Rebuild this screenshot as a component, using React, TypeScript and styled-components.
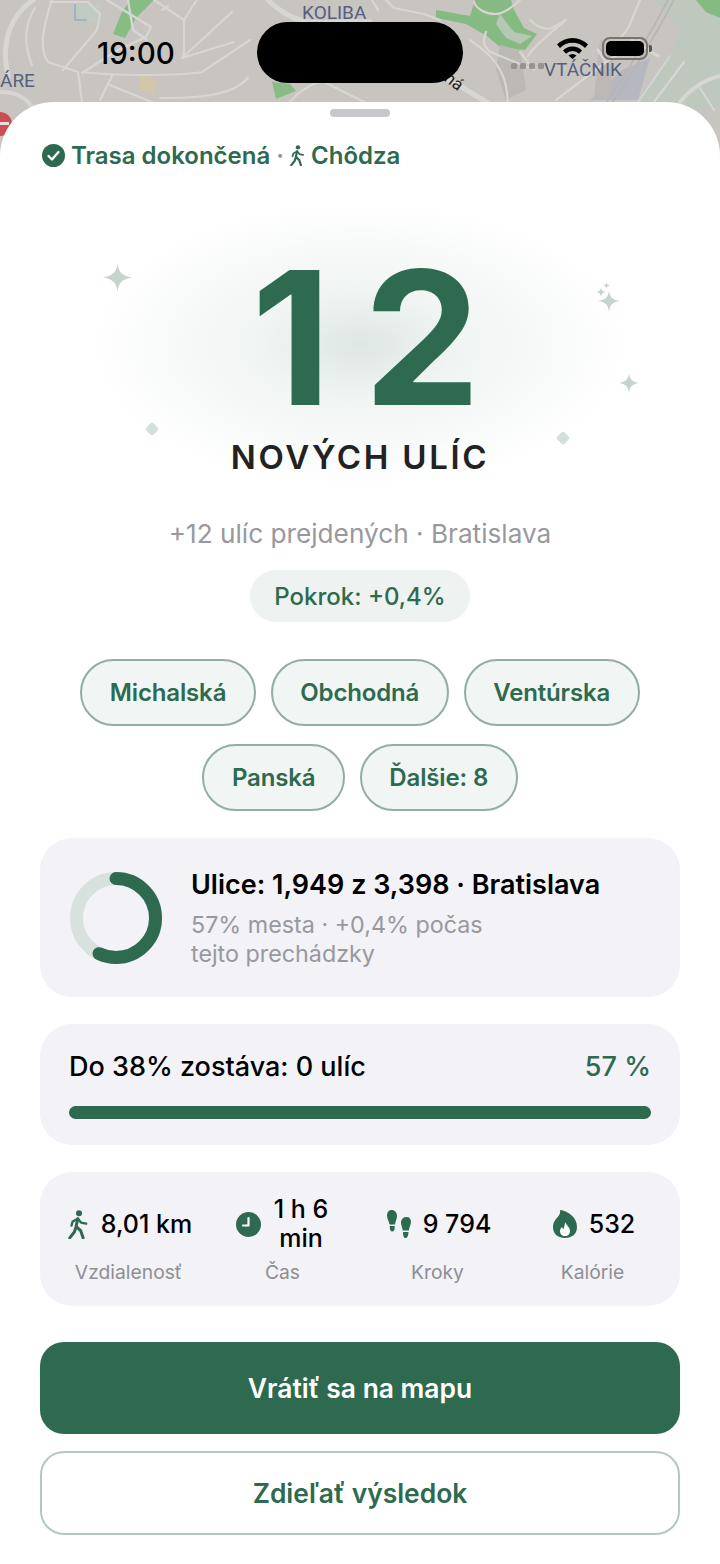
import styled, { createGlobalStyle } from 'styled-components';

const green = '#2d6a4f';

const GlobalStyle = createGlobalStyle`
  html, body {
    margin: 0;
    padding: 0;
    background: #fff;
  }
  * {
    box-sizing: border-box;
  }
`;

function MapBackdrop() {
  return (
    <MapSvg viewBox="0 0 720 170">
      <rect width="720" height="170" fill="#c8c5c1" />
      {/* parks and water */}
      <path d="M656 0h64v110h-90l40-50 10-30z" fill="#bfc8bc" />
      <path d="M590 100l32-30 28-12-12 42z" fill="#b5b7c1" />
      <path d="M130 0h24l-18 18-11 20-12-4 8-20z" fill="#86bd83" />
      <path d="M436 10l34 6 5-16h36l3 10 10 18 13 6-12 16-24-2-14-12-21-12-30-6z" fill="#85ba82" />
      <path d="M500 14l14 18 18 4-12 8-14-6-10-14z" fill="#b6c7b3" />
      <path d="M272 82l18 2 6 7-20 8z" fill="#86bd83" />
      <path d="M696 0h24v18l-14-6z" fill="#85ba82" />
      <path d="M75 4h26v18H80z" fill="#c2cbc1" />
      <path d="M75 4v16h12" fill="none" stroke="#8eb0c6" strokeWidth="1.500" />
      <path d="M140 75l16 4-2 16-14-4z" fill="#d2c7ab" />
      <path d="M500 45l20 5 6 40-20 10-10-30z" fill="#bcb8b4" />
      <path d="M600 40l14 6-4 50-16 2z" fill="#bcb8b4" />
      {/* streets */}
      <g fill="none" stroke="#d8d6d2" strokeWidth="2.200" strokeLinecap="round" strokeLinejoin="round">
        <path d="M33 0C16 12 8 28 6 46c-2 10 0 20 2 30" strokeWidth="5" />
        <path d="M35 8C26 22 22 40 32 65" />
        <path d="M52 0C44 24 38 48 48 62l30 10 4 30" />
        <path d="M50 2h38l12 12-3 16-34 40" />
        <path d="M107 0l44 27-5 10-30 14-34 22" />
        <path d="M128 0l5 30 14 10" />
        <path d="M154 0l30 20v34l-2 4 50-46" />
        <path d="M162 10l6-4M184 20l14-22" />
        <path d="M182 58l52-16" />
        <path d="M82 72c30 4 100 4 120 0l48-32" />
        <path d="M112 76l-12 24M110 85l44 18" />
        <path d="M160 98c30 0 70 0 88-20" />
        <path d="M0 92c15 0 26 4 36 20" strokeWidth="4" />
        <path d="M268 0c14 14 28 20 42 22 20 2 40-2 60 0" strokeWidth="5" />
        <path d="M386 0l8 8 30 6 16 6" />
        <path d="M372 0l6 10" />
        <path d="M290 102c8-10 22-20 34-20l40 20" />
        <path d="M434 72l26 14 36 22" strokeWidth="5" />
        <path d="M470 40c14 10 24 18 30 30 6 10 8 24 8 40" />
        <path d="M486 32c-4 10-2 14 4 20l40 16" />
        <path d="M520 0c-8 8-18 14-24 14-12 0-20-6-22-12" />
        <path d="M530 20c6 6 14 10 22 8l14-8" />
        <path d="M566 20c-14 12-30 24-38 36" />
        <path d="M520 52l14 18M556 100l50-38 34-22" />
        <path d="M640 0l-10 24c-2 6-6 10-10 14" />
        <path d="M606 62l-8-12M632 40l26 16" strokeWidth="3" />
        <path d="M670 56l-32 46" strokeWidth="2" stroke="#cfd5d8" />
        <path d="M684 62l-30 40" />
        <path d="M720 76c-18 4-30 14-40 26" strokeWidth="4" />
        <path d="M700 88l14 22" />
        <path d="M668 0l-14 26-30 50-24 36" stroke="#b9b4af" strokeWidth="1.500" />
        <path d="M674 0l-14 26-30 50-24 36" stroke="#b9b4af" strokeWidth="1.500" />
      </g>
      {/* no-entry sign under the sheet corner */}
      <circle cx="0" cy="124" r="12" fill="#cb4f52" />
      <rect x="0" y="122" width="9" height="3" fill="#f3dada" />
    </MapSvg>
  );
}

function StatusBar() {
  return (
    <StatusRow>
      <Clock>19:00</Clock>
      <Island />
      <SignalDots>
        <i />
        <i />
        <i />
        <i />
      </SignalDots>
      <WifiGlyph width="31" height="22" viewBox="0 0 31 22">
        <path d="M0 7.500a22 22 0 0 1 31 0l-3 3.500a17.500 17.500 0 0 0-25 0z" fill="#000" />
        <path d="M6 13.500a13.500 13.500 0 0 1 19 0l-3 3.300a9 9 0 0 0-13 0z" fill="#000" />
        <path d="M11.500 18.500a6 6 0 0 1 8 0L15.500 22z" fill="#000" />
      </WifiGlyph>
      <Battery>
        <span />
      </Battery>
      <BatteryCap />
    </StatusRow>
  );
}

function Sparkle({ size }: { size: number }) {
  return (
    <svg width={size} height={size} viewBox="0 0 24 24">
      <path d="M12 0c.8 7.500 3.500 10.700 12 12-8.500 1.300-11.200 4.500-12 12-.8-7.500-3.500-10.700-12-12 8.500-1.300 11.200-4.500 12-12z" fill="#c5d4cd" />
    </svg>
  );
}

function WalkIcon({ size }: { size: number }) {
  return (
    <svg width={size * 0.72} height={size} viewBox="0 0 18 25" fill="none">
      <circle cx="9.500" cy="2.800" r="2.600" fill={green} />
      <path d="M8.500 7.500 7 14l4 4 2 6M7 14.500 5.500 19l-4 5" stroke={green} strokeWidth="2.600" strokeLinecap="round" strokeLinejoin="round" />
      <path d="M8.500 7.500 4 10l-1 3.500M8.500 7.500l2.700 3.300 4.500 1" stroke={green} strokeWidth="2" strokeLinecap="round" strokeLinejoin="round" />
    </svg>
  );
}

function ClockIcon() {
  return (
    <svg width="25" height="25" viewBox="0 0 25 25">
      <circle cx="12.500" cy="12.500" r="12.500" fill={green} />
      <path d="M12.500 6v7.500H7" fill="none" stroke="#fff" strokeWidth="2.200" strokeLinecap="round" strokeLinejoin="round" />
    </svg>
  );
}

function StepsIcon() {
  return (
    <svg width="24" height="28" viewBox="0 0 24 28" fill={green}>
      <path d="M0 5.500C0 2 2 0 4.800 0S10 2.500 10 6c0 3-1.500 5-2 8.500H2.500C2 11 0 9 0 5.500z" />
      <path d="M2.700 16h5c.2 3.500-.5 5.500-2.500 5.500S2.800 19.500 2.700 16z" />
      <path d="M24 11.500C24 9 22.200 7 19.500 7S14 9 14 12.500c0 3 1.300 5 1.800 8h6c.4-3.500 2.200-5.500 2.200-9z" />
      <path d="M16 22h5.500c-.1 3.500-1 6-3 6s-2.400-2.500-2.500-6z" />
    </svg>
  );
}

function FlameIcon() {
  return (
    <svg width="24" height="28" viewBox="0 0 24 28">
      <path d="M7 0c8 1 17 7 17 17 0 7-5 11-12 11S0 24 0 17C0 12 3 9 5.500 6 7 4 7.500 2 7 0z" fill={green} />
      <path d="M12 12c1 3 5 5 5 9 0 3-2 5-5 5s-5-2-5-5c0-2 1-3 2-4 .3 1 1 1.700 1.700 2C11 17 12 15 12 12z" fill="#fff" />
    </svg>
  );
}

function ProgressRing() {
  const r = 39.5;
  const circumference = 2 * Math.PI * r;
  return (
    <RingSvg width="92" height="92" viewBox="0 0 92 92">
      <circle cx="46" cy="46" r={r} fill="none" stroke="#d9e1df" strokeWidth="13" />
      <circle
        cx="46"
        cy="46"
        r={r}
        fill="none"
        stroke={green}
        strokeWidth="13"
        strokeLinecap="round"
        strokeDasharray={`${circumference * 0.57} ${circumference}`}
        transform="rotate(-90 46 46)"
      />
    </RingSvg>
  );
}

const chipRows = [
  ['Michalská', 'Obchodná', 'Ventúrska'],
  ['Panská', 'Ďalšie: 8'],
];

export default function App() {
  return (
    <Screen>
      <GlobalStyle />
      <MapBackdrop />
      <MapLabel $left={302} $top={1}>KOLIBA</MapLabel>
      <MapLabel $left={544} $top={58}>VTÁČNIK</MapLabel>
      <MapLabel $left={0} $top={69}>ÁRE</MapLabel>
      <StreetName>ná</StreetName>
      <StatusBar />

      <Sheet>
        <Handle />
        <RouteStatus>
          <svg width="23" height="23" viewBox="0 0 23 23">
            <circle cx="11.500" cy="11.500" r="11.500" fill={green} />
            <path d="M6.500 12l3.500 3.500 6.500-7.500" fill="none" stroke="#fff" strokeWidth="2.300" strokeLinecap="round" strokeLinejoin="round" />
          </svg>
          <span>Trasa dokončená</span>
          <Dot>·</Dot>
          <WalkIcon size={21} />
          <span>Chôdza</span>
        </RouteStatus>

        <Hero>
          <Glow />
          <Decor $left={63} $top={88}><Sparkle size={29} /></Decor>
          <Decor $left={558} $top={115}><Sparkle size={22} /></Decor>
          <Decor $left={556} $top={112}><Sparkle size={10} /></Decor>
          <Decor $left={563} $top={107}><Sparkle size={7} /></Decor>
          <Decor $left={579} $top={198}><Sparkle size={20} /></Decor>
          <Diamond $left={107} $top={249} />
          <Diamond $left={518} $top={258} />
          <BigNumber>12</BigNumber>
          <BigLabel>NOVÝCH ULÍC</BigLabel>
        </Hero>

        <Summary>+12 ulíc prejdených · Bratislava</Summary>
        <ProgressPill>Pokrok: +0,4%</ProgressPill>

        <ChipList>
          {chipRows.map((row) => (
            <ChipRow key={row[0]}>
              {row.map((name) => (
                <Chip key={name}>{name}</Chip>
              ))}
            </ChipRow>
          ))}
        </ChipList>

        <RingCard>
          <ProgressRing />
          <div>
            <CardTitle>Ulice: 1,949 z 3,398 · Bratislava</CardTitle>
            <CardNote>57% mesta · +0,4% počas<br />tejto prechádzky</CardNote>
          </div>
        </RingCard>

        <GoalCard>
          <GoalRow>
            <GoalText>Do 38% zostáva: 0 ulíc</GoalText>
            <GoalPercent>57 %</GoalPercent>
          </GoalRow>
          <Track />
        </GoalCard>

        <StatsCard>
          <Stat>
            <StatValue><WalkIcon size={29} />8,01 km</StatValue>
            <StatName>Vzdialenosť</StatName>
          </Stat>
          <Stat>
            <StatValue $gap={9}><ClockIcon /><Wrapped>1 h 6 min</Wrapped></StatValue>
            <StatName>Čas</StatName>
          </Stat>
          <Stat>
            <StatValue><StepsIcon />9 794</StatValue>
            <StatName>Kroky</StatName>
          </Stat>
          <Stat>
            <StatValue><FlameIcon />532</StatValue>
            <StatName>Kalórie</StatName>
          </Stat>
        </StatsCard>

        <PrimaryButton>Vrátiť sa na mapu</PrimaryButton>
        <SecondaryButton>Zdieľať výsledok</SecondaryButton>
      </Sheet>
    </Screen>
  );
}

const Screen = styled.div`
  position: relative;
  width: 720px;
  height: 1564px;
  overflow: hidden;
  padding-top: 102px;
  font-family: Inter, 'Noto Sans', sans-serif;
  background: #fff;
`;

const MapSvg = styled.svg`
  position: absolute;
  left: 0;
  top: 0;
  width: 720px;
  height: 170px;
  filter: blur(0.6px);
`;

const MapLabel = styled.span<{ $left: number; $top: number }>`
  position: absolute;
  left: ${(p) => p.$left}px;
  top: ${(p) => p.$top}px;
  font-family: Roboto, sans-serif;
  font-size: 19px;
  line-height: 24px;
  color: #565f80;
`;

const StreetName = styled.span`
  position: absolute;
  left: 445px;
  top: 71px;
  font-family: Roboto, sans-serif;
  font-size: 17px;
  line-height: 20px;
  color: #222;
  transform: rotate(38deg);
`;

const StatusRow = styled.div`
  position: absolute;
  left: 0;
  top: 22px;
  width: 720px;
  height: 61px;
  display: flex;
  align-items: center;
  padding-left: 97px;
`;

const Clock = styled.span`
  width: 160px;
  font-size: 29.500px;
  font-weight: 500;
  color: #000;
`;

const Island = styled.div`
  width: 206px;
  height: 61px;
  border-radius: 31px;
  background: #000;
`;

const SignalDots = styled.div`
  display: flex;
  gap: 3px;
  margin: 27px 0 0 48px;
  i {
    width: 6px;
    height: 6px;
    background: #97938f;
    border-radius: 1.500px;
  }
`;

const WifiGlyph = styled.svg`
  margin: -9px 0 0 13px;
`;

const Battery = styled.div`
  width: 46px;
  height: 23px;
  margin: -9px 0 0 14px;
  padding: 2px;
  border: 2px solid #767471;
  border-radius: 8px;
  span {
    display: block;
    width: 100%;
    height: 100%;
    background: #000;
    border-radius: 5px;
  }
`;

const BatteryCap = styled.div`
  width: 3px;
  height: 7px;
  margin: -9px 0 0 1px;
  border-radius: 0 2px 2px 0;
  background: #55534f;
`;

const Sheet = styled.div`
  position: relative;
  height: 1462px;
  padding: 7px 40px 0;
  background: #fff;
  border-radius: 54px 54px 0 0;
  display: flex;
  flex-direction: column;
  align-items: center;
`;

const Handle = styled.div`
  width: 60px;
  height: 8px;
  border-radius: 4px;
  background: #c7c7cc;
`;

const RouteStatus = styled.div`
  align-self: flex-start;
  display: flex;
  align-items: center;
  margin: 18px 0 0 2px;
  gap: 6px;
  height: 40px;
  font-size: 24px;
  font-weight: 600;
  color: ${green};
`;

const Dot = styled.span`
  color: #7f9f90;
`;

const Hero = styled.div`
  position: relative;
  width: 640px;
  height: 345px;
  display: flex;
  flex-direction: column;
  align-items: center;
`;

const Glow = styled.div`
  position: absolute;
  left: 50px;
  top: 25px;
  width: 540px;
  height: 290px;
  background: radial-gradient(ellipse closest-side, rgba(45, 106, 79, 0.16) 0%, rgba(45, 106, 79, 0.075) 35%, rgba(45, 106, 79, 0.03) 72%, rgba(45, 106, 79, 0) 100%);
`;

const Decor = styled.div<{ $left: number; $top: number }>`
  position: absolute;
  left: ${(p) => p.$left}px;
  top: ${(p) => p.$top}px;
  line-height: 0;
`;

const Diamond = styled.div<{ $left: number; $top: number }>`
  position: absolute;
  left: ${(p) => p.$left}px;
  top: ${(p) => p.$top}px;
  width: 10px;
  height: 10px;
  border-radius: 2px;
  background: #d3dfda;
  transform: rotate(45deg);
`;

const BigNumber = styled.div`
  position: relative;
  margin: 69px 0 0 44px;
  font-size: 186px;
  line-height: 187px;
  font-weight: 700;
  letter-spacing: 32px;
  color: ${green};
`;

const BigLabel = styled.div`
  position: relative;
  margin-top: 6px;
  font-size: 33px;
  line-height: 40px;
  font-weight: 600;
  letter-spacing: 2.700px;
  color: #222;
`;

const Summary = styled.div`
  margin-top: -3px;
  font-size: 26.200px;
  line-height: 34px;
  color: #98989d;
`;

const ProgressPill = styled.div`
  margin-top: 19px;
  height: 52px;
  padding: 0 24px;
  display: flex;
  align-items: center;
  border-radius: 26px;
  background: #eef2f0;
  font-size: 24px;
  font-weight: 500;
  color: ${green};
`;

const ChipList = styled.div`
  margin-top: 37px;
  display: flex;
  flex-direction: column;
  gap: 18px;
`;

const ChipRow = styled.div`
  display: flex;
  justify-content: center;
  gap: 15px;
`;

const Chip = styled.div`
  height: 67px;
  padding: 0 27.500px;
  display: flex;
  align-items: center;
  border-radius: 33.500px;
  border: 2px solid #93ada2;
  background: #f1f5f3;
  font-size: 24px;
  font-weight: 600;
  letter-spacing: -0.15px;
  color: ${green};
`;

const Card = styled.div`
  width: 640px;
  border-radius: 32px;
  background: #f2f2f7;
`;

const RingCard = styled(Card)`
  height: 159px;
  margin-top: 27px;
  padding: 0 30px;
  display: flex;
  align-items: center;
  gap: 29px;
`;

const RingSvg = styled.svg`
  flex: none;
`;

const CardTitle = styled.div`
  font-size: 27px;
  line-height: 34px;
  font-weight: 600;
  color: #000;
`;

const CardNote = styled.div`
  margin-top: 8px;
  font-size: 23.300px;
  line-height: 29px;
  color: #98989d;
`;

const GoalCard = styled(Card)`
  height: 121px;
  margin-top: 27px;
  padding: 26px 29px 0;
`;

const GoalRow = styled.div`
  display: flex;
  justify-content: space-between;
  align-items: center;
`;

const GoalText = styled.div`
  font-size: 27px;
  line-height: 34px;
  font-weight: 500;
  color: #000;
`;

const GoalPercent = styled.div`
  font-size: 27px;
  line-height: 34px;
  font-weight: 500;
  color: ${green};
`;

const Track = styled.div`
  height: 13px;
  margin-top: 22px;
  border-radius: 7px;
  background: ${green};
`;

const StatsCard = styled(Card)`
  height: 134px;
  margin-top: 27px;
  padding: 21px 12px 0;
  display: grid;
  grid-template-columns: 153px 155px 155px 155px;
`;

const Stat = styled.div`
  display: flex;
  flex-direction: column;
  align-items: center;
`;

const StatValue = styled.div<{ $gap?: number }>`
  height: 62px;
  padding-left: 3px;
  display: flex;
  align-items: center;
  gap: ${(p) => p.$gap ?? 12}px;
  font-size: 25px;
  line-height: 29px;
  font-weight: 500;
  color: #000;
`;

const Wrapped = styled.span`
  width: 62px;
  text-align: center;
`;

const StatName = styled.div`
  margin-top: 5px;
  font-size: 19.300px;
  line-height: 24px;
  color: #8e8e93;
`;

const PrimaryButton = styled.div`
  width: 640px;
  height: 92px;
  margin-top: 36px;
  display: flex;
  align-items: center;
  justify-content: center;
  border-radius: 24px;
  background: ${green};
  font-size: 26.400px;
  font-weight: 600;
  color: #fff;
`;

const SecondaryButton = styled.div`
  width: 640px;
  height: 84px;
  margin-top: 17px;
  display: flex;
  align-items: center;
  justify-content: center;
  border-radius: 24px;
  border: 2px solid #b3c8be;
  background: #fff;
  font-size: 26.400px;
  font-weight: 600;
  color: ${green};
`;
